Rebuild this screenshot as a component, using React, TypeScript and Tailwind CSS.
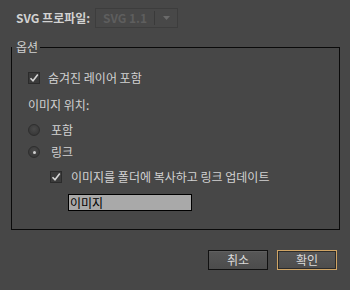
import React from "react";

function Check({ className = "" }: { className?: string }) {
  return (
    <div
      className={
        "w-[12px] h-[12px] border border-[#2b2b2b] bg-[#3b3b3b] flex items-center justify-center shrink-0 " +
        className
      }
    >
      <svg width="10" height="10" viewBox="0 0 10 10">
        <path d="M1.5 5.2 L4 7.8 L8.8 1.6" fill="none" stroke="#d6d6d6" strokeWidth="1.6" />
      </svg>
    </div>
  );
}

function Radio({ on }: { on?: boolean }) {
  return (
    <div className="w-[12px] h-[12px] rounded-full border border-[#2e2e2e] bg-[radial-gradient(circle_at_50%_40%,#4a4a4a,#333333)] flex items-center justify-center shrink-0">
      {on && <div className="w-[3px] h-[3px] rounded-full bg-[#cfcfcf]" />}
    </div>
  );
}

export default function App() {
  return (
    <div
      className="w-[350px] h-[290px] bg-[#474747] text-[#d2d2d2] text-[12px] leading-[16px] overflow-hidden"
      style={{ fontFamily: '"Noto Sans CJK KR", "Noto Sans", sans-serif' }}
    >
      <div className="flex items-center pt-[8px] pl-[16px] h-[28px]">
        <span className="font-bold w-[79px]">SVG 프로파일:</span>
        <div className="flex items-center w-[83px] h-[20px] border border-[#3d3d3d] bg-[#484848]">
          <span className="flex-1 text-center font-bold text-[#5e5e5e]">SVG 1.1</span>
          <div className="w-px h-[14px] bg-[#3a3a3a]" />
          <div className="w-[22px] flex justify-center">
            <svg width="7" height="4" viewBox="0 0 7 4">
              <path d="M0 0 H7 L3.5 4 Z" fill="#6a6a6a" />
            </svg>
          </div>
        </div>
      </div>

      <fieldset className="ml-[11px] mt-[11px] w-[329px] h-[191px] border border-[#0a0a0a]">
        <legend className="pl-[4px] pr-[2px]">옵션</legend>
        <div className="flex flex-col pl-[16px]">
          <div className="flex items-center gap-[8px] h-[20px] mt-[13px]">
            <Check />
            <span>숨겨진 레이어 포함</span>
          </div>
          <div className="flex items-center h-[20px] mt-[7px]">
            <span>이미지 위치:</span>
          </div>
          <div className="flex items-center gap-[11px] h-[20px] mt-[5px]">
            <Radio />
            <span>포함</span>
          </div>
          <div className="flex items-center gap-[11px] h-[20px] mt-[2px]">
            <Radio on />
            <span>링크</span>
          </div>
          <div className="flex items-center gap-[9px] h-[20px] mt-[5px] pl-[22px]">
            <Check />
            <span>이미지를 폴더에 복사하고 링크 업데이트</span>
          </div>
          <div className="mt-[7px] ml-[40px] w-[124px] h-[17px] border border-black bg-[#a9a9a9] text-black flex items-center pl-[1px]">
            이미지
          </div>
        </div>
      </fieldset>

      <div className="flex justify-end gap-[9px] pr-[13px] mt-[20px]">
        <button className="w-[60px] h-[20px] border border-[#111] bg-[linear-gradient(#575757,#4c4c4c)] text-[#dadada] shadow-[inset_0_1px_0_#606060]">
          취소
        </button>
        <button className="w-[60px] h-[20px] border border-[#d0a565] bg-[linear-gradient(#575757,#4c4c4c)] text-[#dadada] shadow-[inset_0_0_0_1px_#2a2a2a]">
          확인
        </button>
      </div>
    </div>
  );
}
